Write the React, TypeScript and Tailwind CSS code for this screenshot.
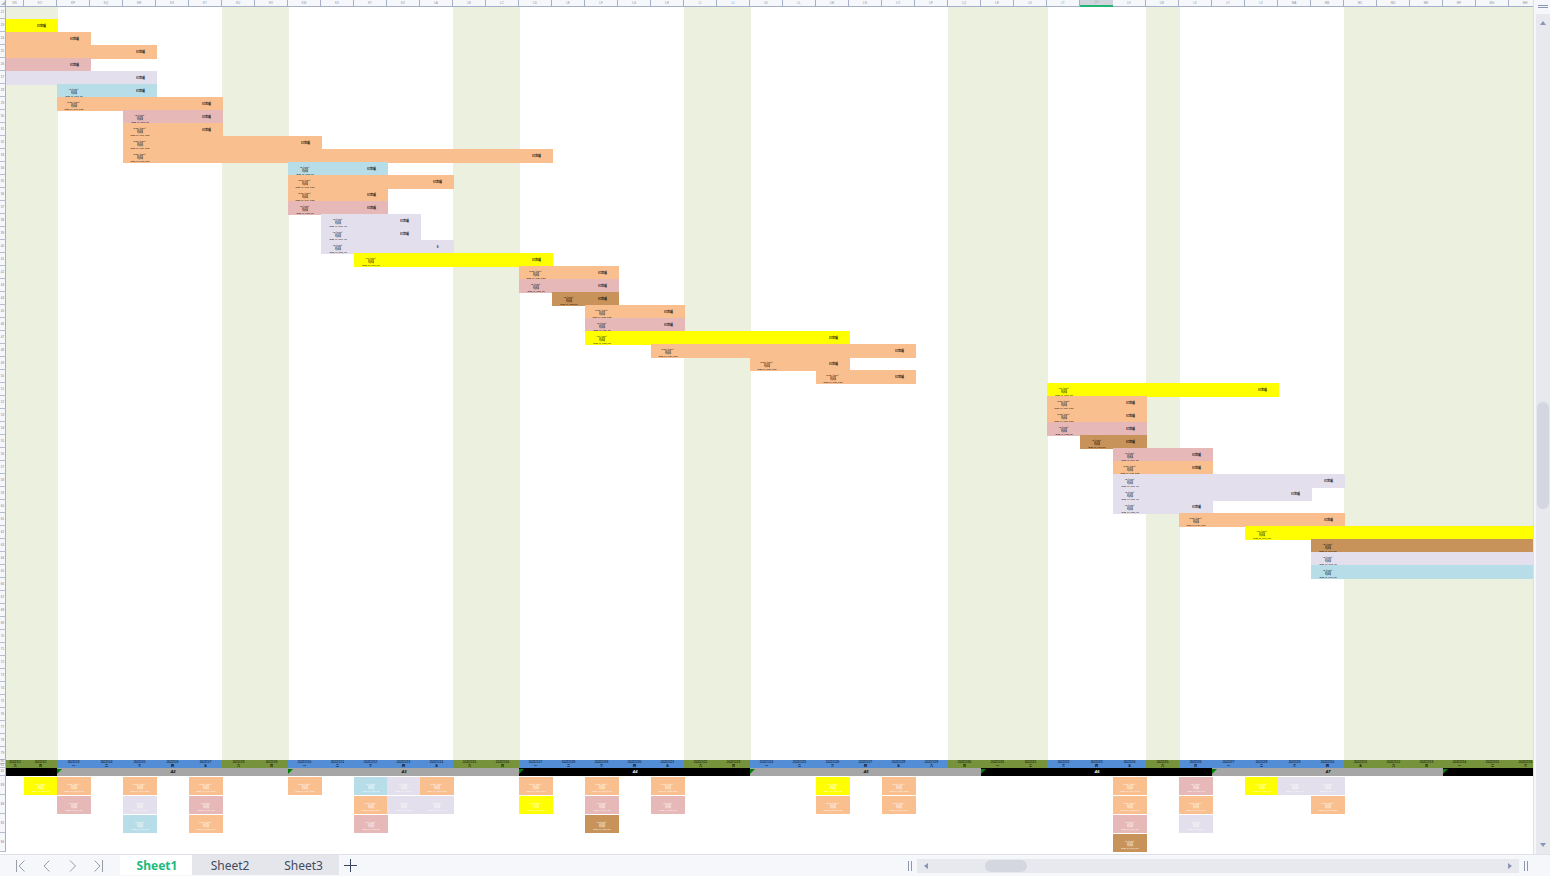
import React from "react";

type Kind = "yellow" | "peach" | "pink" | "lavender" | "blue" | "brown";
type Bar = { kind: Kind; start: number; end: number; status?: string };

const COLUMN_COUNT = 47;
const BODY_ROWS = 58;
const SELECTED_COLUMN = 33;

const fill: Record<Kind, string> = {
  yellow: "bg-[#ffff00]",
  peach: "bg-[#fabf8f]",
  pink: "bg-[#e6b8b7]",
  lavender: "bg-[#e4dfec]",
  blue: "bg-[#b7dee8]",
  brown: "bg-[#c8935a]",
};

const team: Record<Kind, string> = {
  yellow: "AST（Filter）",
  peach: "Team（Filter）",
  pink: "AB（Filter）",
  lavender: "AB（Filter）",
  blue: "AB（Filter）",
  brown: "AB（Filter）",
};

const suffix: Record<Kind, string> = {
  yellow: "unit",
  peach: "team",
  pink: "lab",
  lavender: "vid",
  blue: "lab",
  brown: "dev",
};

const offDays: [number, number][] = [
  [0, 2],
  [7, 9],
  [14, 16],
  [21, 23],
  [29, 32],
  [35, 36],
  [41, 47],
];

const bar = (kind: Kind, start: number, end: number, status = "已完成"): Bar => ({ kind, start, end, status });

const bars: Bar[] = [
  bar("yellow", 0, 2),
  bar("peach", 0, 3),
  bar("peach", 0, 5),
  bar("pink", 0, 3),
  bar("lavender", 0, 5),
  bar("blue", 2, 5),
  bar("peach", 2, 7),
  bar("pink", 4, 7),
  bar("peach", 4, 7),
  bar("peach", 4, 10),
  bar("peach", 4, 17),
  bar("blue", 9, 12),
  bar("peach", 9, 14),
  bar("peach", 9, 12),
  bar("pink", 9, 12),
  bar("lavender", 10, 13),
  bar("lavender", 10, 13),
  bar("lavender", 10, 14, "0"),
  bar("yellow", 11, 17),
  bar("peach", 16, 19),
  bar("pink", 16, 19),
  bar("brown", 17, 19),
  bar("peach", 18, 21),
  bar("pink", 18, 21),
  bar("yellow", 18, 26),
  bar("peach", 20, 28),
  bar("peach", 23, 26),
  bar("peach", 25, 28),
  bar("yellow", 32, 39),
  bar("peach", 32, 35),
  bar("peach", 32, 35),
  bar("pink", 32, 35),
  bar("brown", 33, 35),
  bar("pink", 34, 37),
  bar("peach", 34, 37),
  bar("lavender", 34, 41),
  bar("lavender", 34, 40),
  bar("lavender", 34, 37),
  bar("peach", 36, 41),
  bar("yellow", 38, 47, ""),
  bar("brown", 40, 47, ""),
  bar("lavender", 40, 47, ""),
  bar("blue", 40, 47, ""),
];

const cardRows: Record<number, Kind>[] = [
  {
    1: "yellow", 2: "peach", 4: "peach", 6: "peach", 9: "peach", 11: "blue", 12: "lavender", 13: "peach",
    16: "peach", 18: "peach", 20: "peach", 25: "yellow", 27: "peach", 34: "peach", 36: "pink", 38: "yellow",
    39: "lavender", 40: "lavender",
  },
  {
    2: "pink", 4: "lavender", 6: "pink", 11: "peach", 12: "lavender", 13: "lavender", 16: "yellow", 18: "pink",
    20: "pink", 25: "peach", 27: "peach", 34: "peach", 36: "peach", 40: "peach",
  },
  { 4: "blue", 6: "peach", 11: "pink", 18: "brown", 34: "pink", 36: "lavender" },
  { 34: "brown" },
];

const weeks = [
  { span: 2, label: "", dark: true },
  { span: 7, label: "A2", dark: false },
  { span: 7, label: "A3", dark: false },
  { span: 7, label: "A4", dark: true },
  { span: 7, label: "A5", dark: false },
  { span: 7, label: "A6", dark: true },
  { span: 7, label: "A7", dark: false },
  { span: 3, label: "", dark: true },
];

const weekdays = ["一", "二", "三", "四", "五", "六", "日"];
const columns = Array.from({ length: COLUMN_COUNT }, (_, i) => i);

const isOff = (c: number) => offDays.some(([a, b]) => c >= a && c < b);

function columnName(index: number) {
  let n = index + 300;
  let name = "";
  while (n > 0) {
    n -= 1;
    name = String.fromCharCode(65 + (n % 26)) + name;
    n = Math.floor(n / 26);
  }
  return name;
}

function dateOf(c: number) {
  const d = new Date(Date.UTC(2022, 0, 1 + c));
  return `${d.getUTCFullYear()}/${d.getUTCMonth() + 1}/${d.getUTCDate()}`;
}

function TaskText({ kind, id }: { kind: Kind; id: number }) {
  return (
    <span className="flex w-[34px] shrink-0 flex-col items-center justify-center pt-[2px] whitespace-nowrap text-[2px] leading-[2px]">
      <span>{team[kind]}</span>
      <span>学习组</span>
      <span>新建设</span>
      <span className="mt-px">{`2022_01_0${600 + id}_${suffix[kind]}`}</span>
    </span>
  );
}

function RowHead({ n }: { n: number }) {
  return (
    <th className="border-r border-b border-r-[#a5afc8] border-b-[#b6bdd0] bg-[#f5f7fa] p-0 text-center text-[3px] font-normal text-[#9a6a8c]">
      {n}
    </th>
  );
}

function FreeCells({ from, to }: { from: number; to: number }) {
  const cells: React.ReactNode[] = [];
  let c = from;
  while (c < to) {
    const off = isOff(c);
    let e = c + 1;
    while (e < to && isOff(e) === off) e += 1;
    cells.push(
      <td key={c} colSpan={e - c} className="p-0">
        {off && <div className="-mr-px h-[13px] bg-[#ebf1de]" />}
      </td>
    );
    c = e;
  }
  return <>{cells}</>;
}

function BodyRow({ index }: { index: number }) {
  const b = bars[index - 1];
  if (!b) {
    return (
      <tr className="h-[13px]">
        <RowHead n={index + 22} />
        <FreeCells from={0} to={COLUMN_COUNT} />
      </tr>
    );
  }
  return (
    <tr className="h-[13px]">
      <RowHead n={index + 22} />
      <FreeCells from={0} to={b.start} />
      <td colSpan={b.end - b.start} className="p-0">
        <div className={`relative -mr-px -mb-px flex h-[14px] items-center justify-between text-black ${fill[b.kind]}`}>
          {b.start > 0 ? <TaskText kind={b.kind} id={index} /> : <span />}
          <span className="w-[33px] shrink-0 text-center text-[3px] leading-[3px] font-bold text-black">{b.status}</span>
        </div>
      </td>
      <FreeCells from={b.end} to={COLUMN_COUNT} />
    </tr>
  );
}

function Sheet() {
  return (
    <table className="w-[1542px] table-fixed border-separate border-spacing-0 text-[3px] leading-[3px]">
      <colgroup>
        <col className="w-[6px]" />
        <col className="w-[18px]" />
        <col span={46} className="w-[33px]" />
      </colgroup>
      <thead>
        <tr className="h-[7px]">
          <th className="border-r border-b border-[#a5afc8] bg-[#f5f7fa] p-0">
            <svg viewBox="0 0 5 6" className="block h-[6px] w-[5px]" aria-hidden="true">
              <path d="M5 1v4H1z" fill="#b3b9c6" />
            </svg>
          </th>
          {columns.map((c) => (
            <th
              key={c}
              className={
                c === SELECTED_COLUMN
                  ? "border-b-2 border-[#22b573] bg-[#d1d5dd] p-0 text-center font-normal text-[#7fb8a5]"
                  : "border-r border-b border-[#a5afc8] bg-[#f5f7fa] p-0 text-center font-normal text-[#8b93a6]"
              }
            >
              {columnName(c)}
            </th>
          ))}
        </tr>
      </thead>
      <tbody>
        <tr className="h-[12px]">
          <RowHead n={22} />
          {/* The first row gives up one pixel to the header rule. */}
          {offDays.map(([a, b], i) => {
            const next = offDays[i + 1];
            return (
              <React.Fragment key={a}>
                <td colSpan={b - a} className="p-0">
                  <div className="-mr-px h-[12px] bg-[#ebf1de]" />
                </td>
                {next && <td colSpan={next[0] - b} className="p-0" />}
              </React.Fragment>
            );
          })}
        </tr>
        {Array.from({ length: BODY_ROWS - 1 }, (_, i) => (
          <BodyRow key={i} index={i + 1} />
        ))}
      </tbody>
      <tbody>
        <tr className="h-[4px]">
          <RowHead n={80} />
          {columns.map((c) => (
            <td
              key={c}
              className={`p-0 text-center text-[3px] leading-[3px] whitespace-nowrap text-black ${isOff(c) ? "bg-[#76933c]" : "bg-[#538dd5]"}`}
            >
              {dateOf(c)}
            </td>
          ))}
        </tr>
        <tr className="h-[4px]">
          <RowHead n={81} />
          {columns.map((c) => (
            <td
              key={c}
              className={`p-0 pt-px text-center text-[3px] leading-[3px] font-bold text-black ${isOff(c) ? "bg-[#76933c]" : "bg-[#538dd5]"}`}
            >
              {weekdays[(c + 5) % 7]}
            </td>
          ))}
        </tr>
        <tr className="h-[8px]">
          <RowHead n={82} />
          {weeks.map((w, i) => (
            <td key={i} colSpan={w.span} className={`p-0 ${w.dark ? "bg-black text-white" : "bg-[#a6a6a6] text-black"}`}>
              <div className="flex h-[8px] items-center">
                {i > 0 && (
                  <svg viewBox="0 0 5 5" className="mt-px h-[5px] w-[5px] shrink-0 self-start" aria-hidden="true">
                    <path d="M0 0h5L0 5z" fill="#008000" />
                  </svg>
                )}
                <span className="flex-1 pr-[4px] text-center text-[4px] leading-[4px] font-bold italic">{w.label}</span>
              </div>
            </td>
          ))}
        </tr>
        {cardRows.map((cards, r) => (
          <tr key={r} className="h-[19px]">
            <RowHead n={83 + r} />
            {columns.map((c) => {
              const kind = cards[c];
              return (
                <td key={c} className="p-0">
                  {kind && (
                    <div className={`mt-px -mr-px flex h-[18px] items-center text-white ${fill[kind]}`}>
                      <TaskText kind={kind} id={c + r} />
                    </div>
                  )}
                </td>
              );
            })}
          </tr>
        ))}
      </tbody>
    </table>
  );
}

function VerticalScroll() {
  return (
    <div className="flex w-[17px] shrink-0 flex-col border-l border-[#dcdfe6] bg-[#f5f7fa] pl-[2px]">
      <button aria-label="Split rows" className="flex h-[14px] shrink-0 flex-col items-center gap-px pt-[5px]">
        <span className="h-px w-[10px] bg-[#8a96b2]" />
        <span className="h-px w-[10px] bg-[#8a96b2]" />
      </button>
      <div className="flex flex-1 flex-col items-center bg-[#e8e9ef] py-[7px]">
        <button aria-label="Scroll up">
          <svg viewBox="0 0 6 4" className="block h-[4px] w-[6px]">
            <path d="M3 0 6 4H0z" fill="#8a96b2" />
          </svg>
        </button>
        <div className="grow-[53]" />
        <div className="h-[107px] w-[12px] rounded-full bg-[#d4d7df]" />
        <div className="grow-[47]" />
        <button aria-label="Scroll down">
          <svg viewBox="0 0 6 4" className="block h-[4px] w-[6px]">
            <path d="M0 0h6L3 4z" fill="#8a96b2" />
          </svg>
        </button>
      </div>
    </div>
  );
}

function Grip({ label }: { label: string }) {
  return (
    <button aria-label={label} className="flex h-[10px] shrink-0 gap-[2px]">
      <span className="h-full w-px bg-[#8a96b2]" />
      <span className="h-full w-px bg-[#8a96b2]" />
    </button>
  );
}

const navIcons = [
  { label: "First sheet", d: "M1.5 1v12M9.5 1.5 4 7l5.5 5.5" },
  { label: "Previous sheet", d: "M8.5 1.5 3 7l5.5 5.5" },
  { label: "Next sheet", d: "M3 1.5 8.5 7 3 12.5" },
  { label: "Last sheet", d: "M1.5 1.5 7 7l-5.5 5.5M9.5 1v12" },
];

function BottomBar() {
  return (
    <footer className="flex h-[22px] shrink-0 border-t border-[#dfe1e8] bg-[#f5f7fa] font-['Noto_Sans','Open_Sans',sans-serif]">
      <nav className="flex w-[120px] shrink-0 items-center gap-[15px] pl-[15px]">
        {navIcons.map((n) => (
          <button key={n.label} aria-label={n.label}>
            <svg viewBox="0 0 11 14" className="block h-[14px] w-[11px]" fill="none" stroke="#999da6">
              <path d={n.d} />
            </svg>
          </button>
        ))}
      </nav>
      <div className="flex shrink-0 pb-px text-[12px] leading-[22px] text-[#3f4a5f]">
        <button className="w-[72px] bg-white pl-[2px] text-center font-bold text-[#22b97c]">Sheet1</button>
        <button className="w-[74px] bg-[#e5e6ec] pl-[2px] text-center">Sheet2</button>
        <button className="w-[73px] bg-[#e5e6ec] pl-[2px] text-center">Sheet3</button>
      </div>
      <button aria-label="Add sheet" className="ml-[5px] shrink-0">
        <svg viewBox="0 0 13 13" className="block h-[13px] w-[13px]" stroke="#3a4560" fill="none">
          <path d="M6.5 0v13M0 6.5h13" />
        </svg>
      </button>
      <div className="flex min-w-0 flex-1 items-center justify-end">
        <Grip label="Resize tabs" />
        <div className="mx-[5px] flex h-[14px] w-[602px] items-center bg-[#e8e9ef] px-[7px]">
          <button aria-label="Scroll left">
            <svg viewBox="0 0 4 6" className="block h-[6px] w-[4px]">
              <path d="M4 0v6L0 3z" fill="#8a96b2" />
            </svg>
          </button>
          <div className="ml-[57px] h-[12px] w-[42px] rounded-full bg-[#d4d7df]" />
          <button aria-label="Scroll right" className="ml-auto">
            <svg viewBox="0 0 4 6" className="block h-[6px] w-[4px]">
              <path d="M0 0v6l4-3z" fill="#8a96b2" />
            </svg>
          </button>
        </div>
        <div className="flex w-[26px] shrink-0">
          <Grip label="Resize scroll area" />
        </div>
      </div>
    </footer>
  );
}

export default function App() {
  return (
    <div className="flex h-screen flex-col bg-white font-['Liberation_Sans','Noto_Sans_CJK_SC',sans-serif]">
      <div className="flex min-h-0 flex-1">
        <main className="min-w-0 flex-1 overflow-hidden">
          <Sheet />
        </main>
        <VerticalScroll />
      </div>
      <BottomBar />
    </div>
  );
}
